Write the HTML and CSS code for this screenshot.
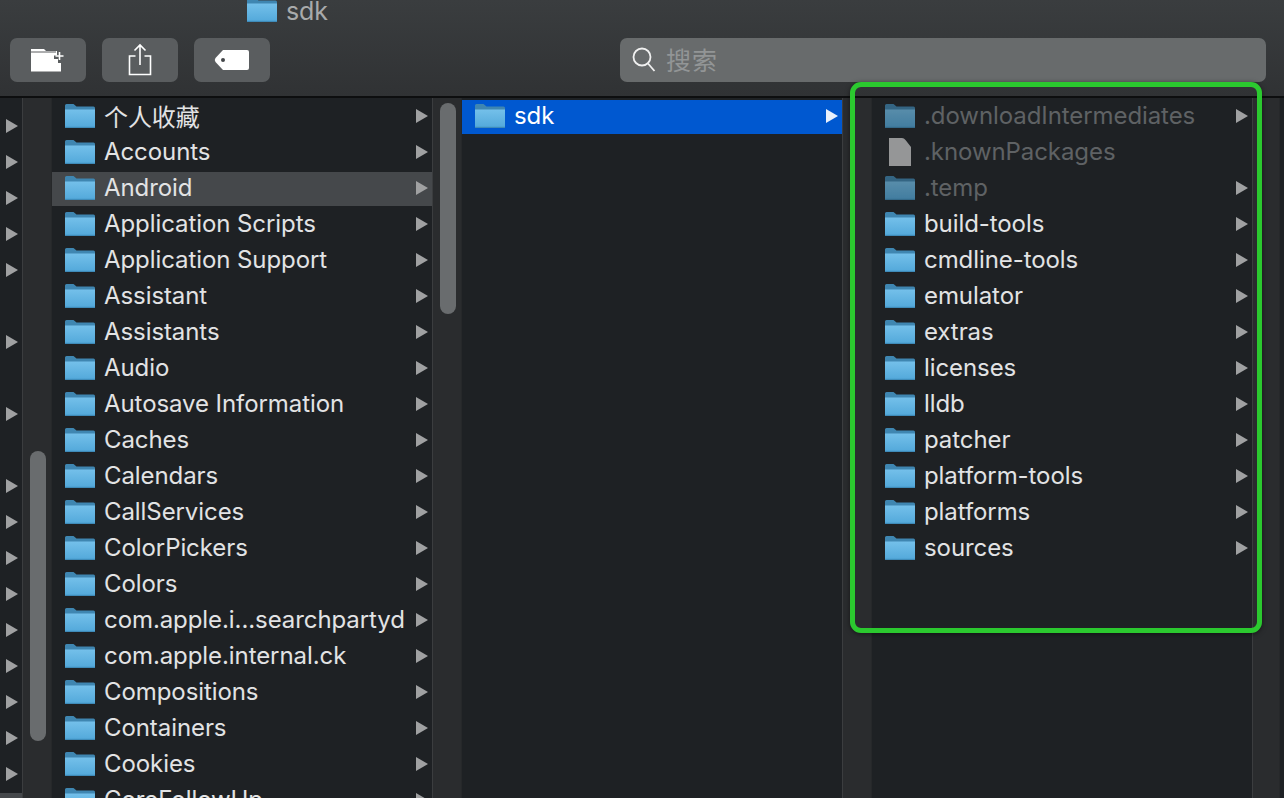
FILE: index.html
```html
<!DOCTYPE html>
<html lang="zh">
<head>
    <meta charset="UTF-8">
    <meta name="viewport" content="width=device-width, initial-scale=1.0">
    <title>sdk</title>
    <link rel="stylesheet" href="styles.css">
</head>
<body>
    <svg class="defs" width="0" height="0">
        <defs>
            <linearGradient id="folder-front" x1="0" y1="0" x2="0" y2="1">
                <stop offset="0" stop-color="#74c0ea"/>
                <stop offset="1" stop-color="#52a8da"/>
            </linearGradient>
            <symbol id="folder" viewBox="0 0 30 24">
                <path d="M0 1.500Q0 0 1.500 0H8.500L11.500 2.500H28.500Q30 2.500 30 4V8H0Z" fill="#3f86b1"/>
                <path d="M0 5.500H30V22.500Q30 24 28.500 24H1.500Q0 24 0 22.500Z" fill="url(#folder-front)"/>
                <rect y="22.800" width="30" height="1.200" fill="#3f8bb9"/>
            </symbol>
        </defs>
    </svg>

    <header class="toolbar">
        <div class="title-row">
            <svg class="folder"><use href="#folder"/></svg>
            <span class="title">sdk</span>
        </div>
        <div class="tools-row">
            <button class="tool-btn" type="button">
                <svg width="36" height="26" viewBox="0 0 36 26">
                    <path d="M1 2H14L16 4H27V8.500H24V12H28V16H31V24.500H1Z" fill="#fff"/>
                    <path d="M1 5H26" stroke="#5a5d5f" stroke-width="1"/>
                    <path d="M29.500 5V13M25.500 9H33.500" stroke="#fff" stroke-width="1.600" fill="none"/>
                </svg>
            </button>
            <button class="tool-btn" type="button">
                <svg width="26" height="34" viewBox="0 0 26 34">
                    <path d="M8.500 13H2.500V31.500H23.500V13H17.500M13 22V2M7.500 7.500L13 2L18.500 7.500" stroke="#fff" stroke-width="1.600" fill="none"/>
                </svg>
            </button>
            <button class="tool-btn" type="button">
                <svg width="36" height="22" viewBox="0 0 36 22">
                    <path d="M9 1H33Q35 1 35 3V19Q35 21 33 21H9L1.500 13Q0 11 1.500 9Z" fill="#fff"/>
                    <circle cx="9" cy="11" r="2" fill="#44474a"/>
                </svg>
            </button>
            <div class="search">
                <svg width="30" height="30" viewBox="0 0 30 30">
                    <circle cx="12" cy="12" r="8.500" stroke="#f0f0f0" stroke-width="1.800" fill="none"/>
                    <path d="M18 18.500L24.500 26" stroke="#f0f0f0" stroke-width="1.800"/>
                </svg>
                <span class="search-text">搜索</span>
            </div>
        </div>
    </header>

    <main class="browser">
        <div class="stub">
            <div class="stub-row"><i class="arrow"></i></div>
            <div class="stub-row"><i class="arrow"></i></div>
            <div class="stub-row"><i class="arrow"></i></div>
            <div class="stub-row"><i class="arrow"></i></div>
            <div class="stub-row"><i class="arrow"></i></div>
            <div class="stub-row"></div>
            <div class="stub-row"><i class="arrow"></i></div>
            <div class="stub-row"></div>
            <div class="stub-row"><i class="arrow"></i></div>
            <div class="stub-row"></div>
            <div class="stub-row"><i class="arrow"></i></div>
            <div class="stub-row"><i class="arrow"></i></div>
            <div class="stub-row"><i class="arrow"></i></div>
            <div class="stub-row"><i class="arrow"></i></div>
            <div class="stub-row"><i class="arrow"></i></div>
            <div class="stub-row"><i class="arrow"></i></div>
            <div class="stub-row"><i class="arrow"></i></div>
            <div class="stub-row"><i class="arrow"></i></div>
            <div class="stub-row"><i class="arrow"></i></div>
            <div class="stub-row stub-selected"></div>
        </div>
        <div class="strip"><div class="thumb thumb-low"></div></div>

        <ul class="column">
            <li class="row"><svg class="folder"><use href="#folder"/></svg><span class="name">个人收藏</span><i class="arrow"></i></li>
            <li class="row"><svg class="folder"><use href="#folder"/></svg><span class="name">Accounts</span><i class="arrow"></i></li>
            <li class="row row-parent"><svg class="folder"><use href="#folder"/></svg><span class="name">Android</span><i class="arrow"></i></li>
            <li class="row"><svg class="folder"><use href="#folder"/></svg><span class="name">Application Scripts</span><i class="arrow"></i></li>
            <li class="row"><svg class="folder"><use href="#folder"/></svg><span class="name">Application Support</span><i class="arrow"></i></li>
            <li class="row"><svg class="folder"><use href="#folder"/></svg><span class="name">Assistant</span><i class="arrow"></i></li>
            <li class="row"><svg class="folder"><use href="#folder"/></svg><span class="name">Assistants</span><i class="arrow"></i></li>
            <li class="row"><svg class="folder"><use href="#folder"/></svg><span class="name">Audio</span><i class="arrow"></i></li>
            <li class="row"><svg class="folder"><use href="#folder"/></svg><span class="name">Autosave Information</span><i class="arrow"></i></li>
            <li class="row"><svg class="folder"><use href="#folder"/></svg><span class="name">Caches</span><i class="arrow"></i></li>
            <li class="row"><svg class="folder"><use href="#folder"/></svg><span class="name">Calendars</span><i class="arrow"></i></li>
            <li class="row"><svg class="folder"><use href="#folder"/></svg><span class="name">CallServices</span><i class="arrow"></i></li>
            <li class="row"><svg class="folder"><use href="#folder"/></svg><span class="name">ColorPickers</span><i class="arrow"></i></li>
            <li class="row"><svg class="folder"><use href="#folder"/></svg><span class="name">Colors</span><i class="arrow"></i></li>
            <li class="row"><svg class="folder"><use href="#folder"/></svg><span class="name">com.apple.i...searchpartyd</span><i class="arrow"></i></li>
            <li class="row"><svg class="folder"><use href="#folder"/></svg><span class="name">com.apple.internal.ck</span><i class="arrow"></i></li>
            <li class="row"><svg class="folder"><use href="#folder"/></svg><span class="name">Compositions</span><i class="arrow"></i></li>
            <li class="row"><svg class="folder"><use href="#folder"/></svg><span class="name">Containers</span><i class="arrow"></i></li>
            <li class="row"><svg class="folder"><use href="#folder"/></svg><span class="name">Cookies</span><i class="arrow"></i></li>
            <li class="row"><svg class="folder"><use href="#folder"/></svg><span class="name">CoreFollowUp</span><i class="arrow"></i></li>
        </ul>
        <div class="strip"><div class="thumb thumb-high"></div></div>

        <ul class="column">
            <li class="row row-selected"><svg class="folder"><use href="#folder"/></svg><span class="name">sdk</span><i class="arrow"></i></li>
        </ul>
        <div class="strip"></div>

        <ul class="column">
            <li class="row row-hidden"><svg class="folder"><use href="#folder"/></svg><span class="name">.downloadIntermediates</span><i class="arrow"></i></li>
            <li class="row row-hidden">
                <svg class="file-icon" viewBox="0 0 30 30"><path d="M4 1H17Q19 1 20.500 3L26 10V29H4Z" fill="#959697"/></svg>
                <span class="name">.knownPackages</span>
            </li>
            <li class="row row-hidden"><svg class="folder"><use href="#folder"/></svg><span class="name">.temp</span><i class="arrow"></i></li>
            <li class="row"><svg class="folder"><use href="#folder"/></svg><span class="name">build-tools</span><i class="arrow"></i></li>
            <li class="row"><svg class="folder"><use href="#folder"/></svg><span class="name">cmdline-tools</span><i class="arrow"></i></li>
            <li class="row"><svg class="folder"><use href="#folder"/></svg><span class="name">emulator</span><i class="arrow"></i></li>
            <li class="row"><svg class="folder"><use href="#folder"/></svg><span class="name">extras</span><i class="arrow"></i></li>
            <li class="row"><svg class="folder"><use href="#folder"/></svg><span class="name">licenses</span><i class="arrow"></i></li>
            <li class="row"><svg class="folder"><use href="#folder"/></svg><span class="name">lldb</span><i class="arrow"></i></li>
            <li class="row"><svg class="folder"><use href="#folder"/></svg><span class="name">patcher</span><i class="arrow"></i></li>
            <li class="row"><svg class="folder"><use href="#folder"/></svg><span class="name">platform-tools</span><i class="arrow"></i></li>
            <li class="row"><svg class="folder"><use href="#folder"/></svg><span class="name">platforms</span><i class="arrow"></i></li>
            <li class="row"><svg class="folder"><use href="#folder"/></svg><span class="name">sources</span><i class="arrow"></i></li>
        </ul>
        <div class="strip strip-last"></div>
        <div class="tail"></div>
    </main>

    <!-- annotation drawn on top of the screenshot -->
    <div class="highlight-box"></div>
</body>
</html>
```

FILE: styles.css
```css
* {
    box-sizing: border-box;
}

html, body {
    height: 100%;
}

body {
    margin: 0;
    height: 100vh;
    overflow: hidden;
    position: relative;
    display: flex;
    flex-direction: column;
    background-color: #1e2124;
    color: #e2e3e4;
    font-family: 'Inter', 'Noto Sans CJK SC', sans-serif;
    font-size: 24px;
    letter-spacing: -0.08px;
}

.defs {
    position: absolute;
}

/* Toolbar */
.toolbar {
    flex: none;
    height: 98px;
    background: linear-gradient(#3a3d3f, #303234);
    border-bottom: 2px solid #0d0e0f;
}

.title-row {
    height: 22px;
    padding-left: 247px;
    display: flex;
    align-items: flex-end;
    gap: 9px;
}

.title {
    color: #a8aaab;
    font-size: 25px;
    line-height: 22px;
}

.tools-row {
    margin-top: 16px;
    padding: 0 18px 0 10px;
    display: flex;
    gap: 16px;
}

.tool-btn {
    width: 76px;
    height: 44px;
    padding: 0;
    border: none;
    border-radius: 7px;
    background-color: #5a5d5f;
    display: flex;
    justify-content: center;
    align-items: center;
}

.search {
    width: 646px;
    height: 44px;
    margin-left: auto;
    padding-left: 10px;
    border-radius: 7px;
    background-color: #686b6c;
    display: flex;
    align-items: center;
    gap: 6px;
}

.search-text {
    margin-bottom: 2px;
    color: #929596;
    font-size: 25px;
    letter-spacing: 1px;
}

/* Column browser */
.browser {
    flex: 1;
    min-height: 0;
    display: flex;
    overflow: hidden;
}

.stub {
    flex: none;
    width: 22px;
    padding-top: 10px;
}

.stub-row {
    height: 36px;
    padding-left: 6px;
    display: flex;
    align-items: center;
}

.stub-selected {
    height: 34px;
    margin-top: 1px;
    background-color: #45484b;
}

.strip {
    flex: none;
    width: 30px;
    padding: 5px 8px 0;
    background-color: #2a2c2e;
    border-left: 1px solid #3b3d3f;
    border-right: 1px solid #26282a;
}

.strip-last {
    width: 28px;
}

.tail {
    flex: 1;
}

.thumb {
    width: 16px;
    margin-left: -1px;
    border-radius: 8px;
    background-color: #696c6e;
}

.thumb-high {
    height: 211px;
}

.thumb-low {
    height: 290px;
    margin-top: 348px;
}

.column {
    flex: none;
    width: 380px;
    margin: 0;
    padding: 0;
    list-style: none;
}

.row {
    height: 36px;
    padding: 0 4px 2px 13px;
    border-top: 2px solid transparent;
    background-clip: padding-box;
    display: flex;
    align-items: center;
}

.folder {
    flex: none;
    width: 30px;
    height: 24px;
}

.file-icon {
    flex: none;
    width: 30px;
    height: 30px;
}

.name {
    margin-left: 9px;
    margin-bottom: 2px;
    white-space: nowrap;
}

.arrow {
    flex: none;
    width: 0;
    height: 0;
    border-left: 12px solid #a0a1a2;
    border-top: 7.5px solid transparent;
    border-bottom: 7.5px solid transparent;
}

.row .arrow {
    margin-left: auto;
}

.row-parent {
    background-color: #45484b;
}

.row-selected {
    background-color: #0058d0;
    color: #fff;
}

.row-selected .arrow {
    border-left-color: #e8f0fb;
}

.row-hidden .name {
    color: #5f6264;
}

.row-hidden .folder {
    opacity: 0.68;
}

.highlight-box {
    position: absolute;
    left: 850px;
    top: 82px;
    width: 412px;
    height: 551px;
    border: 5px solid #2bc92f;
    border-radius: 11px;
    box-shadow: 0 1px 5px rgba(0, 0, 0, 0.5);
}
```
